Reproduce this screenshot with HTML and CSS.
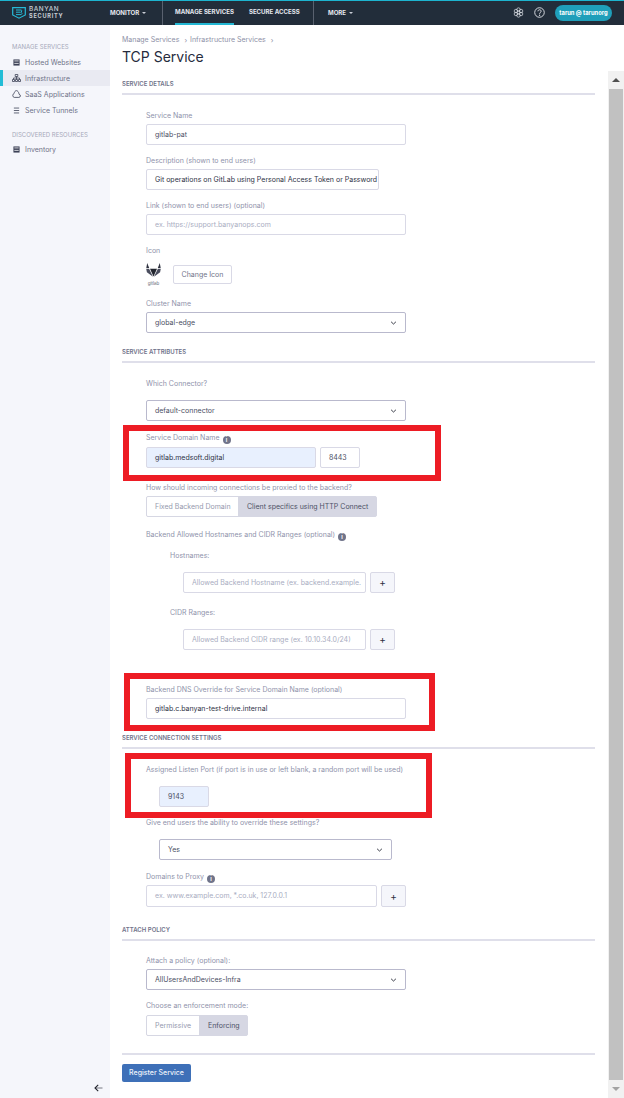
FILE: index.html
```html
<!DOCTYPE html>
<html lang="en">
<head>
<meta charset="utf-8">
<title>TCP Service</title>
<link rel="stylesheet" href="styles.css">
</head>
<body>
<header class="top">
  <div class="brand">
    <svg class="logo" viewBox="0 0 14 12" width="14" height="12"><path d="M.7.7h12.600v7.300L7 11.200.7 8z" fill="none" stroke="#27b9d6" stroke-width="1.200"/><path d="M4 3h5.200l.8.800-1 1.400 1 1.400-.8 1H4M4 5.200h4.500" fill="none" stroke="#27b9d6" stroke-width="1"/></svg>
    <div class="brand-text"><span>BANYAN</span><span class="b2">SECURITY</span></div>
  </div>
  <div class="nav-monitor">MONITOR <i class="caret"></i></div>
  <nav class="nav-main">
    <span class="nav-item active">MANAGE SERVICES</span>
    <span class="nav-item">SECURE ACCESS</span>
  </nav>
  <div class="nav-more">MORE <i class="caret"></i></div>
  <div class="top-right">
    <svg class="gear" viewBox="0 0 12 12" width="11" height="11"><g fill="none" stroke="#d7dbe2" stroke-width=".8"><circle cx="6" cy="6" r="1.800"/><circle cx="6" cy="2.800" r="1.900"/><circle cx="6" cy="9.200" r="1.900"/><circle cx="3.200" cy="4.400" r="1.900"/><circle cx="8.800" cy="4.400" r="1.900"/><circle cx="3.200" cy="7.600" r="1.900"/><circle cx="8.800" cy="7.600" r="1.900"/></g></svg>
    <svg class="help" viewBox="0 0 12 12" width="11" height="11"><circle cx="6" cy="6" r="5.200" fill="none" stroke="#e4e7ec" stroke-width="1"/><path d="M4.300 4.700c0-2.200 3.500-2.200 3.500-.1 0 1.300-1.700 1.300-1.700 2.800" fill="none" stroke="#e4e7ec" stroke-width="1"/><circle cx="6.100" cy="9" r=".7" fill="#e4e7ec"/></svg>
    <span class="pill">tarun @ tarunorg</span>
  </div>
</header>
<div class="shell">
  <aside class="side">
    <div class="side-title first">MANAGE SERVICES</div>
    <div class="side-item">
      <svg viewBox="0 0 8 8" width="7" height="7"><path d="M.5.500h7v7h-7z" fill="#3c4156"/><path d="M1.500 2.200h5M1.500 5h5" stroke="#fff" stroke-width=".9"/></svg>
      <span>Hosted Websites</span>
    </div>
    <div class="side-item on">
      <svg viewBox="0 0 9 8" width="9" height="8"><g fill="none" stroke="#3c4156" stroke-width=".8"><path d="M3.200.500h2.600v2H3.200zM.5 5.500h2v2h-2zM3.500 5.500h2v2h-2zM6.500 5.500h2v2h-2zM4.500 2.500v3M1.500 5.500V4h6v1.500"/></g></svg>
      <span>Infrastructure</span>
    </div>
    <div class="side-item">
      <svg viewBox="0 0 9 8" width="9" height="8"><path d="M2.200 7.400h4.700c2-.1 2-2.800.2-3.100C6.800 1.900 5.400.6 4.500.6 3.300.6 2.300 1.900 2.200 3.400.3 3.800.3 7.200 2.200 7.400z" fill="none" stroke="#3c4156" stroke-width=".8"/></svg>
      <span>SaaS Applications</span>
    </div>
    <div class="side-item">
      <svg viewBox="0 0 8 8" width="7" height="7"><path d="M1 1.200h6M1 4h6M1 6.800h6" stroke="#3c4156" stroke-width=".9"/></svg>
      <span>Service Tunnels</span>
    </div>
    <div class="side-title second">DISCOVERED RESOURCES</div>
    <div class="side-item">
      <svg viewBox="0 0 8 8" width="7" height="7"><path d="M.5.500h7v7h-7z" fill="#3c4156"/><path d="M1.500 2.200h5M1.500 5h5" stroke="#fff" stroke-width=".9"/></svg>
      <span>Inventory</span>
    </div>
    <svg class="collapse" viewBox="0 0 9 8" width="9" height="8"><path d="M8.500 4H1.500" stroke="#8b8d96" stroke-width="1.200"/><path d="M4.200.8 1 4l3.200 3.200" fill="none" stroke="#23252e" stroke-width="1.100"/></svg>
  </aside>
  <main class="main">
    <div class="crumbs"><span>Manage Services</span><span class="sep">›</span><span>Infrastructure Services</span><span class="sep">›</span></div>
    <h1 class="title">TCP Service</h1>
    <div class="scroller">
      <form class="form">
        <h2 class="sec">SERVICE DETAILS</h2>
        <div class="block">
          <label class="lab">Service Name</label>
          <div class="ctl w260 val">gitlab-pat</div>
          <label class="lab mt10">Description (shown to end users)</label>
          <div class="ctl w233 val dark">Git operations on GitLab using Personal Access Token or Password</div>
          <label class="lab mt10">Link (shown to end users) (optional)</label>
          <div class="ctl w260 ph">ex. https://support.banyanops.com</div>
          <label class="lab mt10">Icon</label>
          <div class="icon-row">
            <div class="gitlab">
              <svg viewBox="0 0 15 14" width="15" height="14"><path d="M1.200 0 3.200 5H.3L1.200 0zM13.800 0l.9 5h-2.900L13.800 0z" fill="#2f3240"/><path d="M.2 5.700h2.900L7 13.800.9 9.200zM14.800 5.700h-2.900L8 13.800l6.100-4.600z" fill="#4a4d5e"/><path d="M4 5.700h7L7.500 13.600z" fill="#23262f"/></svg>
              <span>gitlab</span>
            </div>
            <button class="btn-light" type="button">Change Icon</button>
          </div>
          <label class="lab mt10">Cluster Name</label>
          <div class="ctl w260 sel val">global-edge<svg class="chev" viewBox="0 0 8 5" width="7" height="4"><path d="M1 1l3 2.800L7 1" fill="none" stroke="#1f2230" stroke-width="1.100"/></svg></div>
        </div>
        <h2 class="sec mt13">SERVICE ATTRIBUTES</h2>
        <div class="block">
          <label class="lab">Which Connector?</label>
          <div class="ctl w260 sel val mt12">default-connector<svg class="chev" viewBox="0 0 8 5" width="7" height="4"><path d="M1 1l3 2.800L7 1" fill="none" stroke="#1f2230" stroke-width="1.100"/></svg></div>
          <div class="marked mt11">
            <div class="mark m1"></div>
            <label class="lab lab-wide">Service Domain Name <i class="info">i</i></label>
            <div class="row">
              <div class="ctl w170 filled val dark">gitlab.medsoft.digital</div>
              <div class="ctl w40 val">8443</div>
            </div>
          </div>
          <label class="lab mt14">How should incoming connections be proxied to the backend?</label>
          <div class="seg w231">
            <span class="seg-off w92">Fixed Backend Domain</span>
            <span class="seg-on">Client specifics using HTTP Connect</span>
          </div>
          <label class="lab mt12">Backend Allowed Hostnames and CIDR Ranges (optional) <i class="info">i</i></label>
          <label class="lab sub mt11">Hostnames:</label>
          <div class="row inset mt12">
            <div class="ctl w183 ph">Allowed Backend Hostname (ex. backend.example.</div>
            <button class="plus" type="button">+</button>
          </div>
          <label class="lab sub mt14">CIDR Ranges:</label>
          <div class="row inset mt12">
            <div class="ctl w183 ph">Allowed Backend CIDR range (ex. 10.10.34.0/24)</div>
            <button class="plus" type="button">+</button>
          </div>
          <div class="marked mt34">
            <div class="mark m2"></div>
            <label class="lab">Backend DNS Override for Service Domain Name (optional)</label>
            <div class="ctl w260 val dark">gitlab.c.banyan-test-drive.internal</div>
          </div>
        </div>
        <h2 class="sec mt13">SERVICE CONNECTION SETTINGS</h2>
        <div class="block">
          <div class="marked">
            <div class="mark m3"></div>
            <label class="lab">Assigned Listen Port (if port is in use or left blank, a random port will be used)</label>
            <div class="ctl w50 filled val inner mt12">9143</div>
          </div>
          <label class="lab mt10">Give end users the ability to override these settings?</label>
          <div class="ctl w233 sel val inner mt12">Yes<svg class="chev" viewBox="0 0 8 5" width="7" height="4"><path d="M1 1l3 2.800L7 1" fill="none" stroke="#1f2230" stroke-width="1.100"/></svg></div>
          <label class="lab mt11">Domains to Proxy <i class="info">i</i></label>
          <div class="row">
            <div class="ctl w231 ph tall">ex. www.example.com, *.co.uk, 127.0.0.1</div>
            <button class="plus tall" type="button">+</button>
          </div>
        </div>
        <h2 class="sec mt17">ATTACH POLICY</h2>
        <div class="block block-tight">
          <label class="lab">Attach a policy (optional):</label>
          <div class="ctl w260 sel val">AllUsersAndDevices-Infra<svg class="chev" viewBox="0 0 8 5" width="7" height="4"><path d="M1 1l3 2.800L7 1" fill="none" stroke="#1f2230" stroke-width="1.100"/></svg></div>
          <label class="lab mt10">Choose an enforcement mode:</label>
          <div class="seg w102 mt5">
            <span class="seg-off w53">Permissive</span>
            <span class="seg-on">Enforcing</span>
          </div>
        </div>
        <hr class="rule">
        <button class="primary" type="button">Register Service</button>
      </form>
      <div class="scrollbar">
        <span class="sb-btn"><i class="tri up"></i></span>
        <span class="thumb"></span>
        <span class="sb-btn"><i class="tri down"></i></span>
      </div>
    </div>
  </main>
</div>
</body>
</html>
```
FILE: styles.css
```css
* { box-sizing: border-box; }
html, body { margin: 0; padding: 0; height: 1098px; overflow: hidden; }
body { font-family: Inter, "Liberation Sans", sans-serif; font-size: 7px; color: #3a3f55; background: #fff; display: flex; flex-direction: column; }

/* top bar */
.top { height: 25px; flex: none; background: #222d3a; border-top: 1px solid #1db4cf; display: flex; align-items: stretch; color: #e6e9ef; font-weight: 700; font-size: 6.1px; }
.brand { width: 110px; flex: none; display: flex; align-items: center; padding: 0 0 1px 12px; gap: 3px; }
.brand-text { display: flex; flex-direction: column; font-size: 6.4px; line-height: 7px; letter-spacing: .55px; font-weight: 500; color: #c9ced6; }
.b2 { font-size: 5.6px; letter-spacing: .75px; font-weight: 700; }
.nav-monitor { width: 53px; flex: none; display: flex; align-items: center; gap: 3px; padding-bottom: 1px; border-right: 1px solid #59616f; }
.caret { display: inline-block; width: 0; height: 0; border: 2px solid transparent; border-top: 2.500px solid #c9ced6; border-bottom: 0; }
.nav-main { width: 151px; flex: none; display: flex; padding-left: 12px; gap: 15px; border-right: 1px solid #59616f; }
.nav-item { height: 24px; line-height: 21px; white-space: nowrap; }
.nav-item.active { border-bottom: 2px solid #23b7d3; }
.nav-more { margin-left: 14px; display: flex; align-items: center; gap: 3px; padding-bottom: 1px; }
.top-right { margin-left: auto; display: flex; align-items: center; padding-right: 12px; padding-bottom: 1px; }
.gear { margin-right: 10px; }
.help { margin-right: 10px; }
.pill { width: 57px; height: 16px; border-radius: 8px; background: #1f9fba; color: #fff; font-size: 5.8px; line-height: 16px; text-align: center; white-space: nowrap; }

/* frame */
.shell { flex: 1; display: flex; min-height: 0; }
.side { width: 110px; flex: none; background: #f5f6fb; position: relative; color: #6f7389; }
.side-title { font-size: 6px; color: #a6a9ba; height: 9px; line-height: 9px; padding-left: 12px; white-space: nowrap; }
.side-title.first { margin-top: 17px; margin-bottom: 3px; }
.side-title.second { margin-top: 12px; margin-bottom: 2px; }
.side-item { height: 16px; display: flex; align-items: center; padding-left: 12px; font-size: 7px; white-space: nowrap; }
.side-item svg { width: 9px; flex: none; margin-right: 4px; }
.side-item.on { background: #e9eaf2; box-shadow: inset 3px 0 0 #22bcd6; }
.collapse { position: absolute; left: 94px; bottom: 6px; }

/* main */
.main { flex: 1; min-width: 0; display: flex; flex-direction: column; }
.crumbs { margin: 10px 0 0 12px; height: 9px; line-height: 9px; font-size: 7px; color: #8d90a6; display: flex; white-space: nowrap; }
.sep { margin: 1px 3px 0 5px; }
.title { margin: 4px 0 0 12px; height: 18px; line-height: 18px; font-size: 14px; font-weight: 400; color: #262b3d; }
.scroller { flex: 1; min-height: 0; margin-top: 5px; display: flex; }
.form { width: 498px; flex: none; padding: 7px 13px 0 12px; display: flex; flex-direction: column; }
.scrollbar { width: 16px; flex: none; background: #f1f1f1; display: flex; flex-direction: column; align-items: center; }
.sb-btn { height: 18px; flex: none; display: flex; align-items: center; justify-content: center; }
.thumb { flex: 1; width: 14px; background: #c1c1c1; }
.tri { width: 0; height: 0; border: 4px solid transparent; }
.tri.up { border-top: 0; border-bottom: 4px solid #505050; }
.tri.down { border-bottom: 0; border-top: 4px solid #a3a3a3; }

/* form */
.sec { margin: 0; flex: none; height: 17px; font-size: 6px; line-height: 11px; font-weight: 600; color: #70738a; border-bottom: 2px solid #dfdfea; white-space: nowrap; }
.block { padding: 15px 0 0 24px; flex: none; }
.block-tight { padding-top: 14px; }
.lab { display: block; height: 10px; line-height: 12px; font-size: 7px; color: #8f93ab; margin-bottom: 4px; white-space: nowrap; }
.lab-wide { margin-bottom: 5px; }
.lab.sub { margin-left: 24px; }
.ctl { height: 21px; border: 1px solid #d9d9e6; border-radius: 2px; padding: 0 8px; line-height: 19px; font-size: 7px; white-space: nowrap; background: #fff; }
.val { color: #4a4e63; }
.dark { color: #2e3245; }
.ph { color: #a9adc1; }
.filled { background: #e8f0fe; }
.tall { height: 22px; line-height: 20px; }
.sel { border-color: #b9b9cd; display: flex; align-items: center; justify-content: space-between; padding-right: 8px; }
.chev { flex: none; }
.w260 { width: 260px; }
.w170 { width: 170px; }
.w40 { width: 40px; }
.w183 { width: 183px; }
.w50 { width: 50px; }
.w233 { width: 233px; }
.w231 { width: 231px; }
.w102 { width: 102px; }
.inner { margin-left: 13px; }
.row { display: flex; gap: 4px; }
.inset { margin-left: 37px; }
.plus { width: 25px; height: 21px; padding: 0; border: 1px solid #d9d9e6; border-radius: 2px; background: #f5f6fb; color: #2f3342; font: 400 10px/17px Inter, "Liberation Sans", sans-serif; }
.plus.tall { height: 22px; }
.seg { height: 21px; border-radius: 2px; border: 1px solid #d6d7e3; display: flex; font-size: 7px; line-height: 19px; background: #d6d7e3; white-space: nowrap; }
.seg-off { background: #fff; color: #9599ae; padding-left: 8px; border-radius: 1px 0 0 1px; }
.seg-on { flex: 1; color: #4d5166; padding-left: 9px; }
.w92 { width: 91px; }
.w53 { width: 52px; }
.info { display: inline-block; width: 8px; height: 8px; border-radius: 50%; background: #70748a; color: #fff; font: 700 5.500px/8px Inter, "Liberation Sans", sans-serif; text-align: center; vertical-align: -1.500px; margin-left: 1px; }
.icon-row { display: flex; align-items: flex-start; margin-top: 8px; height: 25px; gap: 12px; }
.gitlab { width: 15px; display: flex; flex-direction: column; align-items: center; }
.gitlab svg { display: block; }
.gitlab span { font-size: 4.5px; line-height: 9px; height: 9px; color: #5f6375; margin-top: 2px; }
.btn-light { margin-top: 2px; width: 59px; height: 19px; padding: 0; border: 1px solid #d9d9e6; border-radius: 2px; background: #fff; color: #70748a; font: 400 7px/17px Inter, "Liberation Sans", sans-serif; }
.rule { margin: 17px 0 0; border: 0; height: 2px; flex: none; background: #dfdfea; }
.primary { align-self: flex-start; margin-top: 9px; width: 69px; height: 18px; padding: 0; border: 0; border-radius: 2px; background: #3e70b8; color: #eef3fb; font: 500 7px/18px Inter, "Liberation Sans", sans-serif; }

/* spacing */
.mt5 { margin-top: 5px; }
.mt10 { margin-top: 10px; }
.mt11 { margin-top: 11px; }
.mt12 { margin-top: 12px; }
.mt13 { margin-top: 13px; }
.mt14 { margin-top: 14px; }
.mt17 { margin-top: 17px; }
.mt34 { margin-top: 34px; }

/* red review annotations */
.marked { position: relative; }
.mark { position: absolute; border: 6px solid #ed1c24; pointer-events: none; }
.m1 { left: -23px; top: -7px; width: 318px; height: 56px; }
.m2 { left: -22px; top: -11px; width: 311px; height: 58px; }
.m3 { left: -21px; top: -11px; width: 307px; height: 65px; }
```
